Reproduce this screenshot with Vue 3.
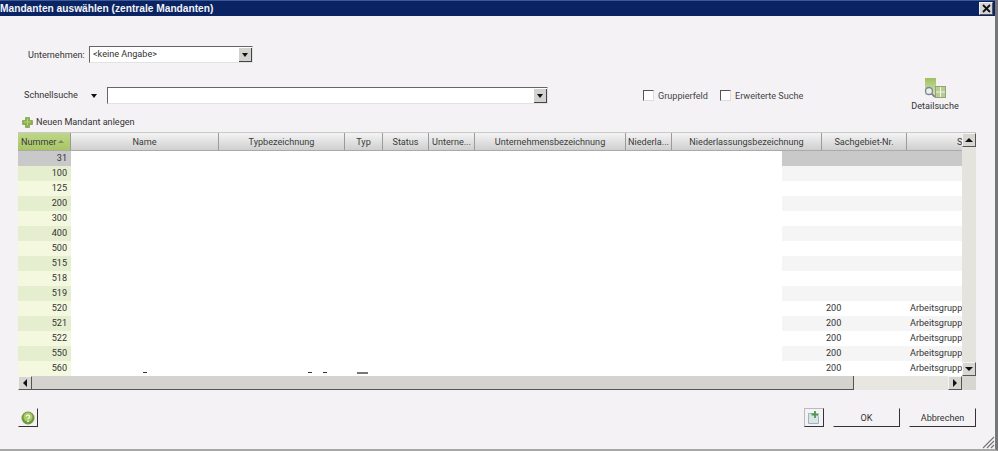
<script setup>
const columns = [
  { label: 'Nummer', w: 53, active: true },
  { label: 'Name', w: 148 },
  { label: 'Typbezeichnung', w: 126 },
  { label: 'Typ', w: 38 },
  { label: 'Status', w: 46 },
  { label: 'Unterne...', w: 46 },
  { label: 'Unternehmensbezeichnung', w: 151 },
  { label: 'Niederla...', w: 46 },
  { label: 'Niederlassungsbezeichnung', w: 150 },
  { label: 'Sachgebiet-Nr.', w: 85 },
  { label: 'S', w: 55, clip: true }
]
const rows = [
  ['31'], ['100'], ['125'], ['200'], ['300'], ['400'], ['500'], ['515'], ['518'], ['519'],
  ['520', '200', 'Arbeitsgruppe'], ['521', '200', 'Arbeitsgruppe'], ['522', '200', 'Arbeitsgruppe'],
  ['550', '200', 'Arbeitsgruppe'], ['560', '200', 'Arbeitsgruppe']
]
</script>

<template>
  <div class="dialog">
    <div class="titlebar">
      <span>Mandanten auswählen (zentrale Mandanten)</span>
      <button class="close">
        <svg width="9" height="9" viewBox="0 0 9 9"><path d="M1 1l7 7M8 1L1 8" stroke="#111" stroke-width="1.8" /></svg>
      </button>
    </div>

    <div class="body">
      <div class="company">
        <label>Unternehmen:</label>
        <div class="combo small">
          <span>&lt;keine Angabe&gt;</span>
          <i class="drop"><b></b></i>
        </div>
      </div>

      <div class="search">
        <label class="quick">Schnellsuche</label>
        <i class="mini-arrow"></i>
        <div class="combo wide"><span></span><i class="drop"><b></b></i></div>
        <label class="check first"><i></i>Gruppierfeld</label>
        <label class="check"><i></i>Erweiterte Suche</label>
        <div class="detail">
          <svg width="24" height="21" viewBox="0 0 24 21">
            <defs>
              <linearGradient id="dg" x1="0" y1="0" x2="0" y2="1">
                <stop offset="0" stop-color="#9fc060" />
                <stop offset="1" stop-color="#d5e2b8" />
              </linearGradient>
            </defs>
            <rect x="2" y="0" width="11" height="17" fill="url(#dg)" />
            <rect x="12.500" y="8.500" width="10" height="11" fill="#b9cc92" stroke="#8da577" />
            <path d="M13 14h9M17.500 9v10" stroke="#f2f4ea" />
            <circle cx="6" cy="13" r="3.500" fill="#e6eef2" stroke="#77868e" stroke-width="1.300" />
            <path d="M8.500 15.500l3.500 3.500" stroke="#8a8a80" stroke-width="2" />
          </svg>
          <span>Detailsuche</span>
        </div>
      </div>

      <div class="new">
        <svg width="11" height="11" viewBox="0 0 11 11">
          <path d="M3.500 .5h4v3h3v4h-3v3h-4v-3h-3v-4h3z" fill="#8cb04c" stroke="#6f9438" stroke-width=".6" />
          <path d="M5 1.500h1v3h3v1H6v3H5V5.500H2v-1h3z" fill="#b4d07c" />
        </svg>
        <span>Neuen Mandant anlegen</span>
      </div>

      <div class="grid">
        <div class="viewport">
          <div class="head">
            <div
              v-for="c in columns"
              :key="c.label"
              class="hcell"
              :class="{ active: c.active, clip: c.clip }"
              :style="{ width: c.w + 'px' }"
            >
              <span>{{ c.label }}</span>
              <i v-if="c.active" class="sort"></i>
            </div>
          </div>
          <div class="rows">
            <div v-for="(r, i) in rows" :key="r[0]" class="row" :class="{ selected: i === 0, odd: i % 2 === 1 }">
              <div class="num">{{ r[0] }}</div>
              <div class="blank"></div>
              <div class="gap"></div>
              <div class="sach">{{ r[1] }}</div>
              <div class="group">{{ r[2] }}</div>
            </div>
            <i class="tick" style="left: 125px"></i>
            <i class="tick" style="left: 290px"></i>
            <i class="tick" style="left: 305px"></i>
            <i class="tick wide-tick" style="left: 339px"></i>
          </div>
        </div>
        <div class="vbar">
          <i class="sb up"><b></b></i>
          <i class="track"></i>
          <i class="sb down"><b></b></i>
        </div>
        <div class="hbar">
          <i class="sb left"><b></b></i>
          <i class="thumb"></i>
          <i class="htrack"></i>
          <i class="sb right"><b></b></i>
        </div>
        <i class="corner"></i>
      </div>

      <div class="footer">
        <button class="flat help">
          <svg width="14" height="14" viewBox="0 0 14 14">
            <circle cx="7" cy="7" r="6.500" fill="#6f9a3a" />
            <circle cx="7" cy="6" r="4.500" fill="#a9cb6c" />
            <path d="M5.200 5.300C5.400 3.800 8.800 3.800 8.800 5.500 8.800 6.800 7 6.800 7 8.300" fill="none" stroke="#f4f8e6" stroke-width="1.300" />
            <circle cx="7" cy="10.300" r=".9" fill="#f4f8e6" />
          </svg>
        </button>
        <div class="spacer"></div>
        <button class="flat addon">
          <svg width="14" height="15" viewBox="0 0 14 15">
            <path d="M1.500 3.500h7l3 3v7h-10z" fill="#d8e6ea" stroke="#9fb4ba" />
            <path d="M8 1v7M4.500 4.500h7" stroke="#4f9a50" stroke-width="1.800" />
          </svg>
        </button>
        <button class="flat text ok">OK</button>
        <button class="flat text cancel">Abbrechen</button>
      </div>
    </div>

    <svg class="grip" width="13" height="13" viewBox="0 0 13 13">
      <path d="M12 1L1 12M12 5L5 12M12 9L9 12" stroke="#77777a" stroke-width="1.200" />
    </svg>
  </div>
</template>

<style scoped>
.dialog {
  width: 998px;
  height: 451px;
  box-sizing: border-box;
  position: relative;
  overflow: hidden;
  background: #f5f2f6;
  border-right: 3px solid #77777a;
  border-bottom: 2px solid #a8a8a8;
  font-family: Roboto, "Liberation Sans", Arial, sans-serif;
  font-size: 9.100px;
  color: #333;
}
.titlebar {
  height: 16px;
  background: #0a2463;
  border-top: 1px solid #3e5a96;
  box-sizing: border-box;
  color: #f2f2f6;
  font-family: "Liberation Sans", Arial, sans-serif;
  font-weight: 700;
  font-size: 10.200px;
  line-height: 15px;
  display: flex;
  justify-content: space-between;
}
.close {
  width: 14px;
  height: 13px;
  margin: 1px 2px 0 0;
  padding: 0;
  border: 1px solid #f0f0f0;
  border-right-color: #555;
  border-bottom-color: #555;
  background: #d6d3d6;
  display: flex;
  align-items: center;
  justify-content: center;
}
.body {
  padding: 0 0 0 18px;
  display: flex;
  flex-direction: column;
}
.company {
  margin: 30px 0 0 10px;
  display: flex;
  align-items: center;
  height: 17px;
}
.company label { width: 61px; }
.combo {
  height: 17px;
  box-sizing: border-box;
  background: #fff;
  border: 1px solid #e2e2e2;
  border-top: 1px solid #666;
  border-left: 1px solid #666;
  display: flex;
  justify-content: space-between;
  line-height: 14px;
  padding-left: 3px;
  color: #333;
}
.combo.small { width: 164px; }
.combo.wide { width: 441px; margin-left: 10px; }
.drop {
  width: 12px;
  height: 13px;
  margin: 1px 0 0;
  background: #d2d2cf;
  border-right: 1px solid #444;
  border-bottom: 1px solid #444;
  display: flex;
  align-items: center;
  justify-content: center;
}
.drop b, .mini-arrow {
  width: 0;
  height: 0;
  border: 3px solid transparent;
  border-top: 4px solid #111;
  border-bottom: 0;
}
.search {
  margin: 24px 0 0 6px;
  display: flex;
  align-items: flex-start;
  height: 38px;
}
.quick { width: 65px; line-height: 17px; }
.mini-arrow { margin: 7px 0 0 2px; }
.check {
  display: flex;
  align-items: center;
  height: 17px;
  color: #444;
}
.check.first { margin-left: 95px; width: 77px; }
.check i {
  width: 9px;
  height: 9px;
  margin-right: 4px;
  background: #fff;
  border: 1px solid #ddd;
  border-top-color: #555;
  border-left-color: #555;
}
.detail {
  margin: -9px 35px 0 auto;
  width: 50px;
  display: flex;
  flex-direction: column;
  align-items: center;
  gap: 2px;
}
.new {
  height: 18px;
  margin: -12px 0 0 4px;
  display: flex;
  align-items: center;
  gap: 3px;
  color: #333;
}
.grid {
  width: 958px;
  height: 257px;
  margin-top: 1px;
  display: grid;
  grid-template-columns: 944px 14px;
  grid-template-rows: 243px 14px;
  background: #fff;
  border-top: 1px solid #c9c9c9;
  box-sizing: border-box;
}
.viewport { overflow: hidden; min-width: 0; }
.head { display: flex; height: 17px; border-bottom: 1px solid #aaa; }
.hcell {
  box-sizing: border-box;
  height: 17px;
  flex: none;
  text-align: center;
  line-height: 18px;
  color: #3a3a3a;
  background: linear-gradient(#f4f4f4, #cfcfcf);
  border-right: 1px solid #9a9a9a;
  position: relative;
  white-space: nowrap;
  overflow: hidden;
}
.hcell.active {
  background: linear-gradient(#bfd789, #a7c565);
  text-align: left;
  padding-left: 3px;
}
.hcell.clip { text-align: left; border-right: 0; padding-left: 50px; }
.sort {
  position: absolute;
  right: 6px;
  top: 7px;
  border: 3px solid transparent;
  border-bottom: 3px solid #7d8c60;
  border-top: 0;
}
.rows { position: relative; }
.row {
  display: grid;
  grid-template-columns: 53px 711px 40px 85px 55px;
  height: 15px;
  line-height: 15px;
  overflow: hidden;
  background: #fff;
}
.row.odd { background: #f6f5f5; }
.row.selected { background: #c9c9c9; }
.num {
  background: #f3f8df;
  text-align: right;
  padding-right: 4px;
  color: #333;
}
.row.odd .num { background: #e6eed0; }
.row.selected .num { background: #c9c9c9; }
.blank { background: #fff; }
.sach { padding-left: 4px; }
.group { overflow: hidden; white-space: nowrap; padding-left: 3px; }
.tick {
  position: absolute;
  top: 221px;
  width: 4px;
  height: 1px;
  background: #333;
}
.tick.wide-tick { width: 11px; height: 2px; background: #777; }
.vbar {
  background: #e4e3de;
  display: flex;
  flex-direction: column;
}
.track { flex: 1; }
.sb {
  flex: none;
  width: 14px;
  height: 14px;
  box-sizing: border-box;
  background: #d8d6d0;
  border: 1px solid #f4f4f4;
  border-right-color: #555;
  border-bottom-color: #555;
  display: flex;
  align-items: center;
  justify-content: center;
}
.sb b { width: 0; height: 0; border: 4px solid transparent; }
.up b { border-top: 0; border-bottom-color: #111; }
.down b { border-bottom: 0; border-top-color: #111; }
.left b { border-left: 0; border-right-color: #111; }
.right b { border-right: 0; border-left-color: #111; }
.hbar {
  display: flex;
  background: #e8e6e1;
}
.thumb {
  flex: none;
  width: 822px;
  background: #d5d3cf;
  border-right: 1px solid #555;
  border-bottom: 1px solid #555;
  box-sizing: border-box;
}
.htrack { flex: 1; }
.corner { background: #d8d6d0; }
.footer {
  margin-top: 19px;
  width: 958px;
  display: flex;
  align-items: flex-start;
}
.flat {
  padding: 0;
  background: #f5f2f6;
  border: 1px solid transparent;
  border-right-color: #333;
  border-bottom-color: #333;
  box-sizing: border-box;
  display: flex;
  align-items: center;
  justify-content: center;
}
.help { width: 20px; height: 19px; }
.spacer { flex: 1; }
.addon { width: 20px; height: 19px; border-color: #bbb #333 #333 #bbb; }
.text {
  width: 67px;
  height: 19px;
  font: 9.100px Roboto, "Liberation Sans", Arial, sans-serif;
  color: #333;
}
.ok { margin-left: 9px; }
.cancel { margin-left: 9px; }
.grip { position: absolute; right: 0; bottom: 0; }
</style>
